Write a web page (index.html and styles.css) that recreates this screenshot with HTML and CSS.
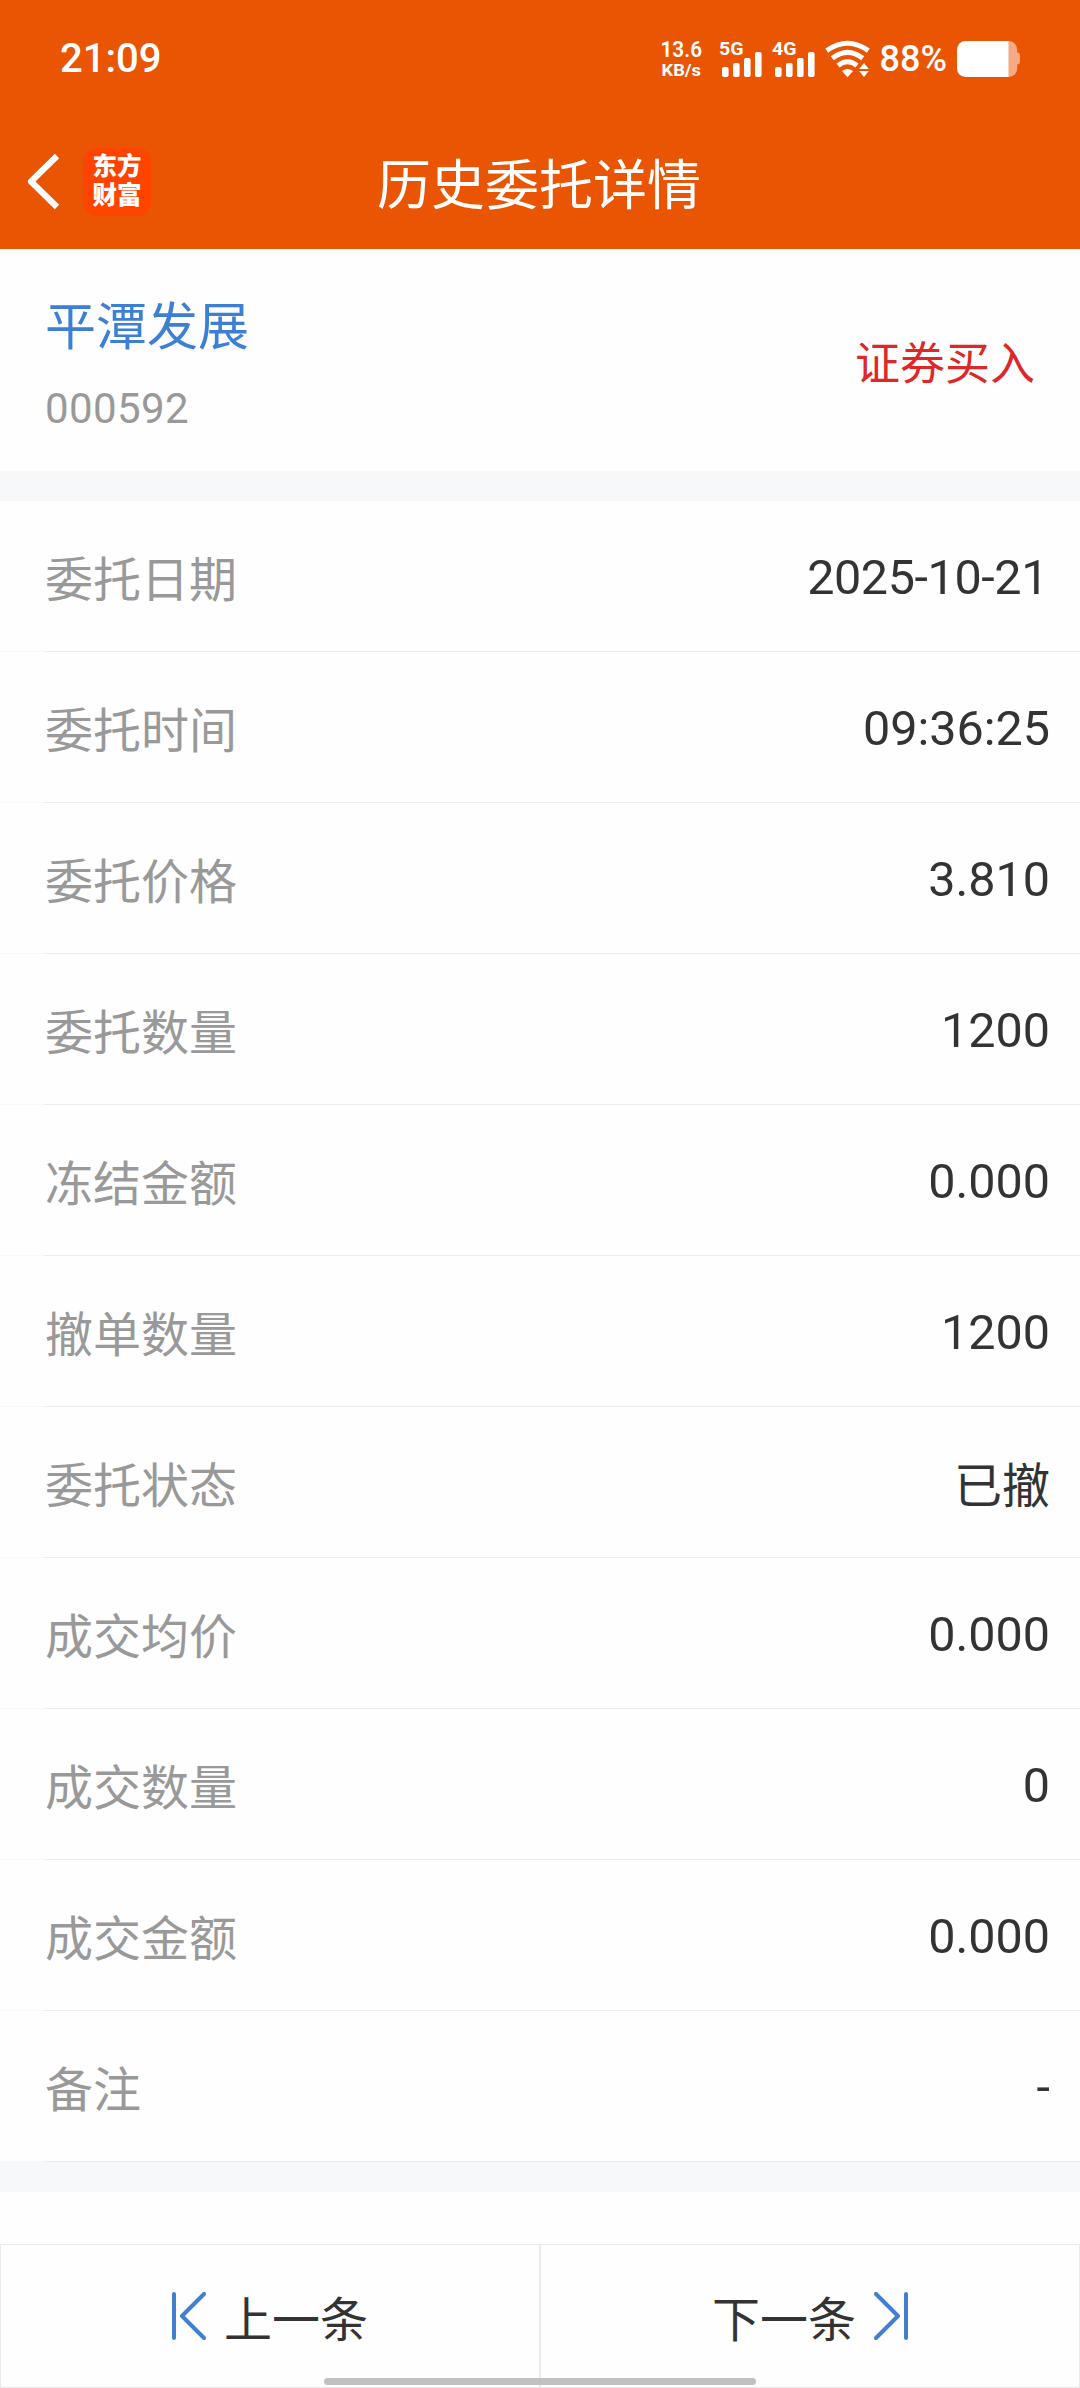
FILE: index.html
```html
<!DOCTYPE html>
<html lang="zh-CN">
<head>
<meta charset="utf-8">
<title>历史委托详情</title>
<link rel="stylesheet" href="styles.css">
</head>
<body>
<header class="header">
  <div class="status">
    <span class="clock">21:09</span>
    <svg class="indicators" viewBox="0 0 380 80" width="380" height="80" fill="#fff">
      <g class="ind-text">
        <text x="20.5" y="36.800" font-size="21.500" font-weight="600" textLength="41.5" lengthAdjust="spacingAndGlyphs">13.6</text>
        <text x="21.500" y="55.800" font-size="17" font-weight="700" textLength="39.5" lengthAdjust="spacingAndGlyphs">KB/s</text>
        <text x="79" y="34.800" font-size="18.5" font-weight="700" textLength="24.500" lengthAdjust="spacingAndGlyphs">5G</text>
        <text x="132" y="34.800" font-size="18.5" font-weight="700" textLength="24.500" lengthAdjust="spacingAndGlyphs">4G</text>
        <text x="239.5" y="51.3" font-size="37" textLength="67.5" lengthAdjust="spacingAndGlyphs">88%</text>
      </g>
      <g>
        <rect x="82" y="47" width="6.6" height="10" rx="2"/>
        <rect x="93" y="43" width="6.6" height="14" rx="2"/>
        <rect x="104" y="38" width="6.6" height="19" rx="2"/>
        <rect x="115" y="32" width="6.6" height="25" rx="2"/>
        <rect x="135" y="47" width="6.6" height="10" rx="2"/>
        <rect x="146" y="43" width="6.6" height="14" rx="2"/>
        <rect x="157" y="38" width="6.6" height="19" rx="2"/>
        <rect x="168" y="32" width="6.6" height="25" rx="2"/>
      </g>
      <g fill="none" stroke="#fff" stroke-width="5">
        <path d="M186.7 30.6Q207.5 15.900 228.300 30.600"/>
        <path d="M192.300 38.300Q207.500 26.400 222.700 38.300"/>
        <path d="M198 45.500Q207.500 38.100 217 45.500"/>
      </g>
      <path d="M202 51Q207.500 47 213 51L207.500 57.300Z"/>
      <path d="M224 43l4.800 6h-9.600zM224 57l4.800-6h-9.600z"/>
      <path d="M368.700 21a8.500 8.500 0 0 1 8.500 8.500v3a3 3 0 0 1 2.800 3v6a3 3 0 0 1-2.800 3v4a8.500 8.500 0 0 1-8.500 8.500z" opacity=".5"/>
      <path d="M325.500 21H368.700V57H325.500a8.500 8.500 0 0 1-8.500-8.500V29.500a8.500 8.500 0 0 1 8.500-8.500z"/>
    </svg>
  </div>
  <div class="nav">
    <svg class="back" viewBox="0 0 34 58" width="34" height="58" fill="none" stroke="#fff" stroke-width="6.200" stroke-linejoin="round"><path d="M31 3L5 28.500L31 54"/></svg>
    <div class="logo">东方<br>财富</div>
    <h1 class="title">历史委托详情</h1>
  </div>
</header>
<section class="stock">
  <div>
    <div class="name">平潭发展</div>
    <div class="code">000592</div>
  </div>
  <div class="side">证券买入</div>
</section>
<main class="list">
  <div class="row"><span>委托日期</span><span class="value value-date">2025-10-21</span></div>
  <div class="row"><span>委托时间</span><span class="value">09:36:25</span></div>
  <div class="row"><span>委托价格</span><span class="value">3.810</span></div>
  <div class="row"><span>委托数量</span><span class="value">1200</span></div>
  <div class="row"><span>冻结金额</span><span class="value">0.000</span></div>
  <div class="row"><span>撤单数量</span><span class="value">1200</span></div>
  <div class="row"><span>委托状态</span><span class="value value-cjk">已撤</span></div>
  <div class="row"><span>成交均价</span><span class="value">0.000</span></div>
  <div class="row"><span>成交数量</span><span class="value">0</span></div>
  <div class="row"><span>成交金额</span><span class="value">0.000</span></div>
  <div class="row"><span>备注</span><span class="value">-</span></div>
</main>
<footer class="footer">
  <div class="pager">
    <svg viewBox="0 0 34 48" width="34" height="48"><path d="M2 2V46M32 2L10 24L32 46"/></svg>
    <span>上一条</span>
  </div>
  <div class="pager">
    <span>下一条</span>
    <svg viewBox="0 0 34 48" width="34" height="48"><path d="M32 2V46M2 2L24 24L2 46"/></svg>
  </div>
</footer>
<div class="home-bar"></div>
</body>
</html>
```
FILE: styles.css
```css
* { box-sizing: border-box; }

body {
  margin: 0;
  width: 1080px;
  height: 2388px;
  display: flex;
  flex-direction: column;
  overflow: hidden;
  background: #fefefe;
  color: #333;
  font-family: "Noto Sans CJK SC", sans-serif;
  font-size: 48px;
  line-height: 60px;
}

.header {
  height: 249px;
  background: #ea5504;
  color: #fff;
}

.status {
  height: 114px;
  padding: 20px 60px 0;
  display: flex;
  justify-content: space-between;
}

.clock {
  padding-top: 9px;
  font: 500 40px/60px Roboto, sans-serif;
}

.ind-text {
  font-family: Roboto, sans-serif;
  font-weight: 500;
}

.nav {
  height: 135px;
  padding-left: 26px;
  display: grid;
  grid-template-columns: 34px 68px 1fr;
  column-gap: 23px;
  align-items: center;
}

.back { display: block; }

.logo {
  width: 68px;
  height: 68px;
  padding-top: 2px;
  border-radius: 14px;
  background: #ff4400;
  text-align: center;
  font-size: 24.5px;
  font-weight: 900;
  line-height: 29.5px;
}

.title {
  margin: 0 0 0 203px;
  font-size: 54px;
  font-weight: 400;
}

.stock {
  height: 252px;
  padding: 0 45px;
  border-bottom: 30px solid #f7f8fa;
  display: flex;
  justify-content: space-between;
}

.name {
  padding-top: 42px;
  color: #3c7fd4;
  font-size: 51px;
  line-height: 64px;
}

.code {
  padding-top: 24px;
  color: #999;
  font: 42px/60px Roboto, sans-serif;
  letter-spacing: 0.4px;
}

.side {
  padding-top: 82px;
  color: #dc2828;
  font-size: 45px;
}

.list { border-bottom: 30px solid #f7f8fa; }

.row {
  height: 151px;
  padding: 0 30px 1px 45px;
  display: flex;
  align-items: center;
  justify-content: space-between;
  color: #999;
  background: linear-gradient(90deg, #f7f8fa 45px, #ebebed 45px) bottom / 100% 1px no-repeat;
}

.value {
  padding-top: 3px;
  color: #333;
  font-family: Roboto, sans-serif;
  font-size: 48.5px;
}

.value-date {
  padding-right: 2px;
  letter-spacing: -0.4px;
}

.value-cjk {
  padding-top: 0;
  font-family: "Noto Sans CJK SC", sans-serif;
  font-size: 48px;
}

.footer {
  height: 144px;
  margin-top: auto;
  display: grid;
  grid-template-columns: 1fr 1fr;
}

.pager {
  border: 1px solid #ebebeb;
  display: flex;
  align-items: center;
  justify-content: center;
  gap: 18px;
}

.pager svg {
  fill: none;
  stroke: #427fcf;
  stroke-width: 4;
  stroke-linecap: round;
  stroke-linejoin: round;
}

.home-bar {
  position: absolute;
  left: 324px;
  top: 2378px;
  width: 432px;
  height: 7px;
  border-radius: 4px;
  background: #c1c1c1;
}
```
